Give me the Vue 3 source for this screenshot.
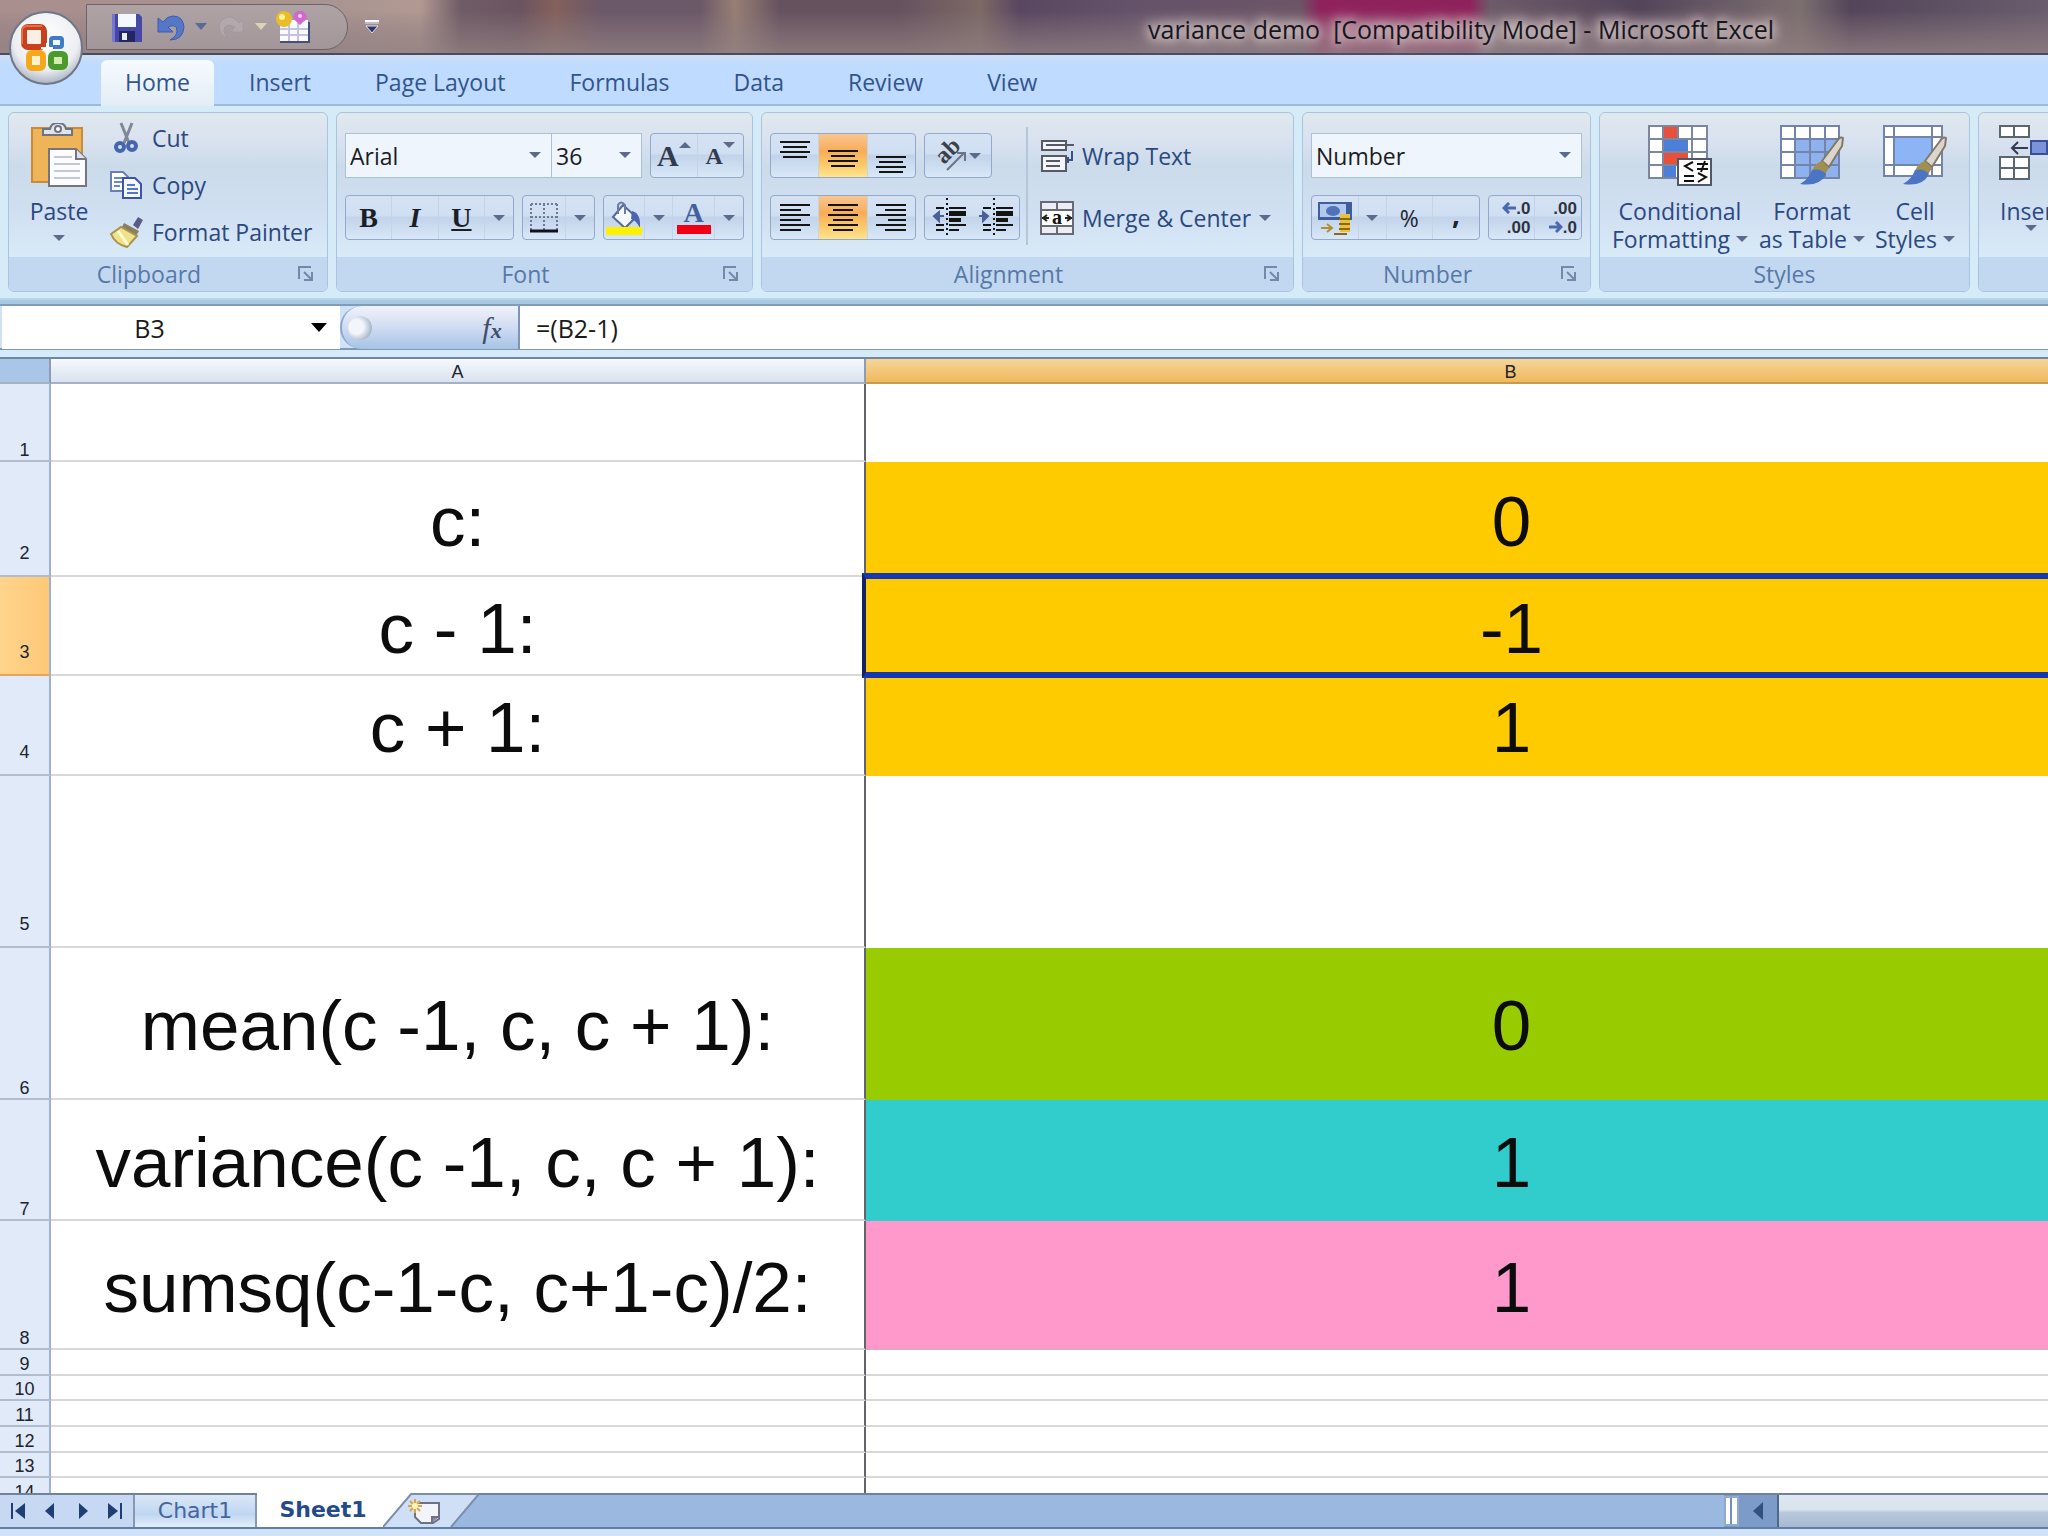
<script setup>
import { ref } from 'vue'

const tabs = ['Home', 'Insert', 'Page Layout', 'Formulas', 'Data', 'Review', 'View']
const fontName = ref('Arial')
const fontSize = ref('36')
const format = ref('Number')
const cellName = ref('B3')
const formula = ref('=(B2-1)')

const rows = [
  { n: 1, h: 78, a: '', b: '', fill: 'blank' },
  { n: 2, h: 115, a: 'c:', b: '0', fill: 'gold', raised: true },
  { n: 3, h: 99, a: 'c - 1:', b: '-1', fill: 'gold', raised: true, active: true },
  { n: 4, h: 100, a: 'c + 1:', b: '1', fill: 'gold', raised: true },
  { n: 5, h: 172, a: '', b: '', fill: 'blank', raised: true },
  { n: 6, h: 152, a: 'mean(c -1, c, c + 1):', b: '0', fill: 'green' },
  { n: 7, h: 121, a: 'variance(c -1, c, c + 1):', b: '1', fill: 'teal' },
  { n: 8, h: 129, a: 'sumsq(c-1-c, c+1-c)/2:', b: '1', fill: 'pink' },
  { n: 9, h: 26 },
  { n: 10, h: 25 },
  { n: 11, h: 26 },
  { n: 12, h: 26 },
  { n: 13, h: 25 },
  { n: 14, h: 26 }
]

const hAlign = [
  { name: 'Align left', lines: [[0, 30], [0, 21], [0, 30], [0, 21], [0, 30], [0, 21]] },
  { name: 'Center', on: true, lines: [[0, 30], [5, 25], [0, 30], [5, 25], [0, 30], [5, 25]] },
  { name: 'Align right', lines: [[0, 30], [9, 30], [0, 30], [12, 30], [0, 30], [9, 30]] }
]
const vAlign = [
  { name: 'Top align', y: 8 },
  { name: 'Middle align', y: 17, on: true },
  { name: 'Bottom align', y: 23 }
]
</script>

<template>
  <div class="window">
    <header class="titlebar">
      <button class="office" aria-label="Office Button">
        <svg viewBox="0 0 76 76" width="76" height="76">
          <defs>
            <radialGradient id="orb" cx="50%" cy="35%" r="65%">
              <stop offset="0" stop-color="#ffffff" /><stop offset="0.7" stop-color="#eceef2" /><stop offset="1" stop-color="#a9b3c4" />
            </radialGradient>
          </defs>
          <circle cx="38" cy="38" r="36" fill="url(#orb)" stroke="#6f7686" stroke-width="2" />
          <rect x="16" y="17" width="20" height="20" rx="4" fill="#fbeee4" stroke="#c8401c" stroke-width="6" />
          <path d="M14 34V21q0-5 5-5h15" fill="none" stroke="#e2704a" stroke-width="2" />
          <rect x="43" y="28" width="11" height="9" rx="2" fill="none" stroke="#3c7cc8" stroke-width="4" />
          <rect x="21" y="43" width="14" height="15" rx="3" fill="#fff3cc" stroke="#f5a81c" stroke-width="6" />
          <rect x="43" y="44" width="14" height="13" rx="3" fill="#d5ecb0" stroke="#4a9a2c" stroke-width="6" />
          <path d="M33 38h12M39 33v12" stroke="#fff" stroke-width="2" />
        </svg>
      </button>
      <div class="qat">
        <button aria-label="Save">
          <svg viewBox="0 0 32 32" width="32" height="32">
            <path d="M1 3h27l3 3v25H1z" fill="#4648a8" /><path d="M7 3h18v13H7z" fill="#f3f7ff" />
            <path d="M8 20h16v11H8z" fill="#24265e" /><path d="M11 22h5v7h-5z" fill="#e8ecfa" /><path d="M1 3h3v28H1z" fill="#7476d0" />
          </svg>
        </button>
        <button aria-label="Undo">
          <svg viewBox="0 0 32 32" width="32" height="32">
            <path d="M3 7v14h15l-5-5q9-4 9 4 0 5-7 9 13 0 14-13Q28 5 18 5q-6 0-10 6z" fill="#5577c8" stroke="#3c5cae" />
          </svg>
        </button>
        <svg class="tri" viewBox="0 0 12 7" width="12" height="7"><path d="M0 0h12L6 7z" fill="#5a6a98" /></svg>
        <button aria-label="Redo">
          <svg viewBox="0 0 32 32" width="32" height="32">
            <path d="M28 9v12H16l4-5q-11-5-11 4 0 4 4 7Q4 25 4 15 6 5 16 6q5 1 8 6z" fill="#b3a8ac" stroke="#a1989f" />
          </svg>
        </button>
        <svg class="tri" viewBox="0 0 12 7" width="12" height="7"><path d="M0 0h12L6 7z" fill="#ddd3b4" /></svg>
        <button aria-label="Edit table">
          <svg viewBox="0 0 36 32" width="36" height="32">
            <path d="M5 11h30v21H5z" fill="#46507e" /><path d="M5 9h28v21H5z" fill="#fbfbff" />
            <path d="M5 18h28M5 24h28M14 12v18M23 12v18" stroke="#c0c4e0" stroke-width="2" />
            <circle cx="9" cy="8" r="8" fill="#e8bd27" /><circle cx="7" cy="6" r="3" fill="#fff0a0" />
            <path d="M20 2q5-5 10 0 5 5-2 9l-3 3-3-3q-6-4-2-9z" fill="#cf6ac8" /><circle cx="25" cy="5" r="2" fill="#f7c9f2" />
          </svg>
        </button>
      </div>
      <button class="qat-more" aria-label="Customize Quick Access Toolbar">
        <svg viewBox="0 0 16 14" width="16" height="14"><path d="M1 1h14" stroke="#fff" stroke-width="2" /><path d="M1 3h14M2 6h12l-6 7z" fill="#2d3868" stroke="#dfe2ee" /></svg>
      </button>
      <h1>variance demo&nbsp; [Compatibility Mode] - Microsoft Excel</h1>
    </header>

    <nav class="tabs">
      <a v-for="(t, i) in tabs" :key="t" href="#" :class="{ on: i === 0 }">{{ t }}</a>
    </nav>

    <section class="ribbon">
      <div class="group clipboard">
        <div class="body">
          <button class="big paste">
            <svg viewBox="0 0 56 64" width="56" height="64">
              <path d="M1 5h50v54H1z" fill="#f0b458" stroke="#c88c38" stroke-width="2" />
              <path d="M12 12V6h7q1-6 8-6t8 6h6v6z" fill="#dfe3ea" stroke="#6d7480" stroke-width="2" /><circle cx="27" cy="6" r="3" fill="#fff" stroke="#6d7480" stroke-width="2" />
              <path d="M18 26h27l10 10v27H18z" fill="#fcfcff" stroke="#76757e" stroke-width="2" /><path d="M45 26v10h10" fill="#dde3ee" stroke="#76757e" stroke-width="2" />
              <path d="M23 34h18M23 41h26M23 48h26M23 55h26" stroke="#c4c8d4" stroke-width="2" />
            </svg>
            <span>Paste</span>
            <svg class="tri" viewBox="0 0 12 6" width="12" height="6"><path d="M0 0h12L6 6z" /></svg>
          </button>
          <div class="list">
            <button>
              <svg viewBox="0 0 34 32" width="34" height="32">
                <path d="M12 1l8 20M23 1l-8 20" stroke="#7e8898" stroke-width="3" /><circle cx="11" cy="25" r="4" fill="none" stroke="#4565ad" stroke-width="4" /><circle cx="23" cy="24" r="4" fill="none" stroke="#4565ad" stroke-width="4" />
              </svg>Cut
            </button>
            <button>
              <svg viewBox="0 0 34 32" width="34" height="32">
                <path d="M2 3h12l5 5v14H2z" fill="#fff" stroke="#6a7fb4" stroke-width="2" /><path d="M5 9h8M5 13h8M5 17h6" stroke="#6a8ad0" stroke-width="2" />
                <path d="M14 9h12l6 6v14H14z" fill="#f5f8ff" stroke="#3d56a4" stroke-width="2" /><path d="M18 16h8M18 20h11M18 24h11" stroke="#5676c8" stroke-width="2" />
              </svg>Copy
            </button>
            <button>
              <svg viewBox="0 0 34 32" width="34" height="32">
                <path d="M24 9l5-8 5 3-5 9z" fill="#5a5c88" /><path d="M15 7l15 8-3 5L12 13z" fill="#8a8060" />
                <path d="M12 11l16 9-10 11Q6 28 2 18z" fill="#f0e28a" stroke="#a8924c" stroke-width="2" /><path d="M9 15l10 14" stroke="#fffad0" stroke-width="3" />
              </svg>Format Painter
            </button>
          </div>
        </div>
        <footer><span>Clipboard</span><button class="launch" aria-label="Clipboard options"><svg viewBox="0 0 16 16" width="16" height="16"><path d="M1 13V1h12" /><path d="M6 6l8 8M14 6v8H6" /></svg></button></footer>
      </div>

      <div class="group font">
        <div class="body rows">
          <div class="row">
            <div class="combos">
              <label class="combo name"><select v-model="fontName" aria-label="Font"><option>Arial</option></select><svg class="tri" viewBox="0 0 12 6" width="12" height="6"><path d="M0 0h12L6 6z" /></svg></label>
              <label class="combo size"><select v-model="fontSize" aria-label="Font size"><option>36</option></select><svg class="tri" viewBox="0 0 12 6" width="12" height="6"><path d="M0 0h12L6 6z" /></svg></label>
            </div>
            <div class="set grow">
              <button aria-label="Increase font size"><b class="ser l">A</b><svg class="tri up" viewBox="0 0 12 6" width="12" height="6"><path d="M0 6h12L6 0z" /></svg></button>
              <button aria-label="Decrease font size"><b class="ser s">A</b><svg class="tri up" viewBox="0 0 12 6" width="12" height="6"><path d="M0 0h12L6 6z" /></svg></button>
            </div>
          </div>
          <div class="row">
            <div class="set biu">
              <button><b class="ser">B</b></button>
              <button><b class="ser"><i>I</i></b></button>
              <button><b class="ser"><u>U</u></b></button>
              <button class="drop" aria-label="Underline styles"><svg class="tri" viewBox="0 0 12 6" width="12" height="6"><path d="M0 0h12L6 6z" /></svg></button>
            </div>
            <div class="set border">
              <button aria-label="Bottom border"><svg viewBox="0 0 28 30" width="28" height="30"><path d="M1 1h26M1 14h26M1 1v26M14 1v26M27 1v26" stroke="#6d7896" stroke-width="2" stroke-dasharray="2 2" fill="none" /><path d="M0 28h28" stroke="#10131c" stroke-width="3" /></svg></button>
              <button class="drop" aria-label="Borders"><svg class="tri" viewBox="0 0 12 6" width="12" height="6"><path d="M0 0h12L6 6z" /></svg></button>
            </div>
            <div class="set colors">
              <button aria-label="Fill color"><svg viewBox="0 0 36 36" width="36" height="36"><path d="M17 5l13 12-11 11L7 17z" fill="#f6f8ff" stroke="#59698f" stroke-width="2" /><path d="M12 14V5q3-5 7 0v9" fill="none" stroke="#6b7ba8" stroke-width="2" /><path d="M26 11q9 2 8 17-4-8-9-9z" fill="#4b63b4" /><path d="M0 27h36v8H0z" fill="#fdf000" /></svg></button>
              <button class="drop" aria-label="Fill colors"><svg class="tri" viewBox="0 0 12 6" width="12" height="6"><path d="M0 0h12L6 6z" /></svg></button>
              <button class="fc" aria-label="Font color"><b class="ser">A</b><span class="bar"></span></button>
              <button class="drop" aria-label="Font colors"><svg class="tri" viewBox="0 0 12 6" width="12" height="6"><path d="M0 0h12L6 6z" /></svg></button>
            </div>
          </div>
        </div>
        <footer><span>Font</span><button class="launch" aria-label="Font options"><svg viewBox="0 0 16 16" width="16" height="16"><path d="M1 13V1h12" /><path d="M6 6l8 8M14 6v8H6" /></svg></button></footer>
      </div>

      <div class="group align">
        <div class="body">
          <div class="rows left">
            <div class="row">
              <div class="set three">
                <button v-for="v in vAlign" :key="v.name" :aria-label="v.name" :class="{ on: v.on }">
                  <svg viewBox="0 0 30 43" width="30" height="43"><path :d="`M0 ${v.y}h30M3 ${v.y + 5}h24M0 ${v.y + 10}h30M3 ${v.y + 15}h24`" stroke="#141414" stroke-width="2" /></svg>
                </button>
              </div>
              <div class="set ori">
                <button aria-label="Orientation">
                  <svg viewBox="0 0 34 34" width="34" height="34"><text x="0" y="0" transform="translate(9 26) rotate(-45)" font-family="Liberation Serif" font-weight="bold" font-size="24" fill="#3c4048">ab</text><path d="M12 31l17-17M22 14h8v8" fill="none" stroke="#6a7484" stroke-width="2" /></svg>
                  <svg class="tri" viewBox="0 0 12 6" width="12" height="6"><path d="M0 0h12L6 6z" /></svg>
                </button>
              </div>
            </div>
            <div class="row">
              <div class="set three">
                <button v-for="h in hAlign" :key="h.name" :aria-label="h.name" :class="{ on: h.on }">
                  <svg viewBox="0 0 30 27" width="30" height="27"><path v-for="(l, i) in h.lines" :key="i" :d="`M${l[0]} ${1 + i * 5}H${l[1]}`" stroke="#141414" stroke-width="2" /></svg>
                </button>
              </div>
              <div class="set indent">
                <button v-for="d in [0, 1]" :key="d" :aria-label="d ? 'Increase indent' : 'Decrease indent'">
                  <svg viewBox="0 0 34 40" width="34" height="40"><path d="M4 10h8M17 10h17M4 27h8M17 27h17M4 32h8M17 32h10" stroke="#141414" stroke-width="2" /><path d="M17 13h17v5H17zM17 20h12v4H17z" fill="#141414" /><path d="M15 0v40" stroke="#141414" stroke-width="2" stroke-dasharray="2 3" /><path :d="d ? 'M0 18h8M4 14l5 4-5 5z' : 'M3 18h9M7 14l-5 4 5 5z'" stroke="#4a6099" fill="#4a6099" stroke-width="2" /></svg>
                </button>
              </div>
            </div>
          </div>
          <div class="rows right">
            <button class="wide"><svg viewBox="0 0 34 34" width="34" height="34"><path d="M2 2h24v9H2zM2 17h24v15H2z" fill="#f4f5f8" stroke="#555b66" stroke-width="2" /><path d="M6 6h28M6 22h14M6 27h14" stroke="#555b66" stroke-width="2" /><path d="M32 12v9h-3M28 18v6" fill="none" stroke="#39508c" stroke-width="2" /></svg>Wrap Text</button>
            <button class="wide"><svg viewBox="0 0 34 34" width="34" height="34"><path d="M1 1h32v32H1z" fill="#eceef3" stroke="#666b76" stroke-width="2" /><path d="M1 9h32M1 25h32M17 1v8M17 25v8" stroke="#666b76" stroke-width="2" /><path d="M2 10h30v14H2z" fill="#fff" /><path d="M2 17h7M25 17h7M7 14l-4 3 4 3M27 14l4 3-4 3" fill="none" stroke="#222" stroke-width="2" /><text x="12" y="23" font-family="Liberation Serif" font-weight="bold" font-size="20" fill="#111">a</text></svg>Merge &amp; Center<svg class="tri" viewBox="0 0 12 6" width="12" height="6"><path d="M0 0h12L6 6z" /></svg></button>
          </div>
        </div>
        <footer><span>Alignment</span><button class="launch" aria-label="Alignment options"><svg viewBox="0 0 16 16" width="16" height="16"><path d="M1 13V1h12" /><path d="M6 6l8 8M14 6v8H6" /></svg></button></footer>
      </div>

      <div class="group number">
        <div class="body rows">
          <label class="combo"><select v-model="format" aria-label="Number format"><option>Number</option></select><svg class="tri" viewBox="0 0 12 6" width="12" height="6"><path d="M0 0h12L6 6z" /></svg></label>
          <div class="row">
            <div class="set money">
              <button aria-label="Accounting format"><svg viewBox="0 0 36 36" width="36" height="36"><path d="M1 2h34v18H1z" fill="#3f5f9c" /><path d="M3 4h26v13H3z" fill="#b3c8ee" /><ellipse cx="16" cy="11" rx="7" ry="5" fill="#4f72b8" /><path d="M23 14h10v18H23z" fill="#e8c23c" /><path d="M22 19h11M22 24h11M22 29h11M17 34h13" stroke="#8c6a10" stroke-width="2" /><path d="M4 28h10M10 24l5 4-5 4" fill="none" stroke="#b09030" stroke-width="2" /></svg></button>
              <button class="drop" aria-label="Currencies"><svg class="tri" viewBox="0 0 12 6" width="12" height="6"><path d="M0 0h12L6 6z" /></svg></button>
              <button class="pct">%</button>
              <button class="comma">,</button>
            </div>
            <div class="set dec">
              <button aria-label="Increase decimal"><span><svg viewBox="0 0 14 12" width="14" height="12"><path d="M14 6H3M7 1L2 6l5 5" /></svg>.0</span><span>.00</span></button>
              <button aria-label="Decrease decimal"><span>.00</span><span><svg viewBox="0 0 14 12" width="14" height="12"><path d="M0 6h11M7 1l5 5-5 5" /></svg>.0</span></button>
            </div>
          </div>
        </div>
        <footer><span>Number</span><button class="launch" aria-label="Number options"><svg viewBox="0 0 16 16" width="16" height="16"><path d="M1 13V1h12" /><path d="M6 6l8 8M14 6v8H6" /></svg></button></footer>
      </div>

      <div class="group styles">
        <div class="body">
          <button class="big">
            <svg viewBox="0 0 64 64" width="64" height="64"><path d="M1 3h58v52H1z" fill="#fff" /><path d="M15 3h15v13H15zM15 29h25v13H15z" fill="#e8503a" /><path d="M15 16h25v13H15zM15 42h13v13H15z" fill="#4c7fd8" /><path d="M1 3h58v52H1zM1 16h58M1 29h58M1 42h58M15 3v52M30 3v13M44 3v52" fill="none" stroke="#7b879e" stroke-width="2" /><path d="M30 36h33v26H30z" fill="#fff" stroke="#50576a" stroke-width="2" /><path d="M45 39l-8 4 8 5M36 53h10M36 58h10M49 41h11M49 46h11M57 38l-4 11M50 50l8 4-8 5" fill="none" stroke="#111" stroke-width="2" /></svg>
            <span>Conditional</span><span>Formatting<svg class="tri" viewBox="0 0 12 6" width="12" height="6"><path d="M0 0h12L6 6z" /></svg></span>
          </button>
          <button class="big">
            <svg viewBox="0 0 64 64" width="64" height="64"><path d="M1 3h58v52H1z" fill="#fff" /><path d="M15 16h44v39H15z" fill="#8fb2ee" /><path d="M1 3h58v52H1zM1 16h58M1 29h58M1 42h58M15 3v52M30 3v52M45 3v52" fill="none" stroke="#7284ac" stroke-width="2" /><path d="M63 15q-3-2-6 3L42 38l7 6 13-21z" fill="#dcd5cc" stroke="#807868" stroke-width="2" /><path d="M42 38l7 7-5 8-12-5q3-8 10-10z" fill="#a09050" /><path d="M32 47q-3 9-12 14 20 3 26-10-5-6-14-4z" fill="#4c74c4" /></svg>
            <span>Format</span><span>as Table<svg class="tri" viewBox="0 0 12 6" width="12" height="6"><path d="M0 0h12L6 6z" /></svg></span>
          </button>
          <button class="big">
            <svg viewBox="0 0 64 64" width="64" height="64"><path d="M1 3h58v50H1z" fill="#fff" /><path d="M11 14h38v28H11z" fill="#8db4f4" /><path d="M1 3h58v50H1zM1 14h58M1 42h58M11 3v50M49 3v50" fill="none" stroke="#7284ac" stroke-width="2" /><path d="M63 15q-3-2-6 3L42 38l7 6 13-21z" fill="#dcd5cc" stroke="#807868" stroke-width="2" /><path d="M42 38l7 7-5 8-12-5q3-8 10-10z" fill="#a09050" /><path d="M32 47q-3 9-12 14 20 3 26-10-5-6-14-4z" fill="#4c74c4" /></svg>
            <span>Cell</span><span>Styles<svg class="tri" viewBox="0 0 12 6" width="12" height="6"><path d="M0 0h12L6 6z" /></svg></span>
          </button>
        </div>
        <footer><span>Styles</span></footer>
      </div>

      <div class="group cells">
        <div class="body">
          <button class="big">
            <svg viewBox="0 0 64 64" width="64" height="64"><path d="M1 3h29v11H1zM1 34h29v22H1z" fill="#fff" stroke="#5c6670" stroke-width="2" /><path d="M15 3v11M15 34v22M1 45h29" stroke="#5c6670" stroke-width="2" /><path d="M32 18h32v13H32z" fill="#7a94dc" stroke="#3c4f94" stroke-width="2" /><path d="M48 18v13" stroke="#3c4f94" stroke-width="2" /><path d="M29 25H13M19 19l-6 6 6 6" fill="none" stroke="#333c50" stroke-width="2" /></svg>
            <span>Insert</span><span><svg class="tri" viewBox="0 0 12 6" width="12" height="6"><path d="M0 0h12L6 6z" /></svg></span>
          </button>
        </div>
        <footer></footer>
      </div>
    </section>

    <section class="formula-bar">
      <div class="namebox">
        <input v-model="cellName" aria-label="Name Box" />
        <svg viewBox="0 0 16 9" width="16" height="9"><path d="M0 0h16L8 9z" fill="#000" /></svg>
      </div>
      <div class="fx">
        <span class="knob"></span>
        <button aria-label="Insert Function"><i>f</i><i class="x">x</i></button>
      </div>
      <input v-model="formula" class="formula" aria-label="Formula Bar" />
    </section>

    <main class="sheet">
      <table>
        <colgroup><col class="c0" /><col class="ca" /><col class="cb" /></colgroup>
        <thead><tr><th class="corner"></th><th>A</th><th class="sel">B</th></tr></thead>
        <tbody>
          <tr v-for="r in rows" :key="r.n" :style="{ height: r.h + 'px' }">
            <th :class="{ sel: r.active, raised: r.raised }">{{ r.n }}</th>
            <td class="a">{{ r.a }}</td>
            <td :class="[r.fill, { active: r.active }]">{{ r.b }}</td>
          </tr>
        </tbody>
      </table>
    </main>

    <footer class="bottom">
      <div class="nav">
        <button aria-label="First sheet"><svg viewBox="0 0 14 16" width="14" height="16"><path d="M0 0h2v16H0zM14 0v16L4 8z" /></svg></button>
        <button aria-label="Previous sheet"><svg viewBox="0 0 14 16" width="14" height="16"><path d="M11 0v16L2 8z" /></svg></button>
        <button aria-label="Next sheet"><svg viewBox="0 0 14 16" width="14" height="16"><path d="M3 0v16l9-8z" /></svg></button>
        <button aria-label="Last sheet"><svg viewBox="0 0 14 16" width="14" height="16"><path d="M12 0h2v16h-2zM0 0v16l10-8z" /></svg></button>
      </div>
      <button class="tab chart">Chart1</button>
      <button class="tab current">Sheet1</button>
      <button class="new" aria-label="Insert Worksheet">
        <svg viewBox="0 0 96 34" width="96" height="34"><path d="M0 0h28v2L0 34z" fill="#fff" /><path d="M0 34L28 2h68L68 34z" fill="#cfe0f6" /><path d="M0 34L28 1h68L68 34" fill="none" stroke="#7c8cab" stroke-width="2" /><path d="M34 10h22v16l-6 4H38l-6-6V14" fill="#f3f4fa" stroke="#6c7284" stroke-width="2" /><path d="M56 24h-7v6" fill="#8a90a0" stroke="#6c7284" stroke-width="2" /><path d="M32 6v14M25 13h14M27 8l10 10M37 8L27 18" stroke="#d9a545" stroke-width="2" /><circle cx="32" cy="13" r="3" fill="#fff3b8" /></svg>
      </button>
      <div class="scroll">
        <span class="split"></span>
        <button class="arrow" aria-label="Scroll left"><svg viewBox="0 0 10 18" width="10" height="18"><path d="M10 0v18L0 9z" fill="#33507e" /></svg></button>
        <span class="thumb"></span>
      </div>
    </footer>
  </div>
</template>

<style>
body { margin: 0; }
</style>

<style scoped>
* { box-sizing: border-box; }
.window {
  display: flex; flex-direction: column; height: 100vh; overflow: hidden;
  font-family: "Open Sans", "Noto Sans", sans-serif; font-size: 23px; line-height: 28px; color: #2b4880; background: #cfe2f6;
}
button, input, select { font: inherit; color: inherit; border: 0; background: none; padding: 0; margin: 0; border-radius: 0; }
button { display: flex; align-items: center; justify-content: center; white-space: nowrap; }
svg { display: block; flex: none; }
.tri { fill: #5c6b8a; }

.titlebar {
  position: relative; z-index: 2; flex: none; display: flex; align-items: center; height: 55px; padding-left: 86px;
  border-bottom: 2px solid #484c60;
  background:
    linear-gradient(180deg, transparent 20%, rgba(160, 145, 140, 0.55) 100%),
    linear-gradient(180deg, transparent 20%, rgba(112, 89, 106, 0.5) 100%),
    linear-gradient(90deg, #a98f8e 0, #a89492 330px, #b29a92 420px, #705c66 460px, #6a5460 520px, #84615c 555px, #6b5868 600px, #6b5868 700px, #987f74 735px, #66525f 780px, #66525f 900px, #7d6965 980px, #594660 1020px, #64526a 1130px, #6c5566 1300px, #8f225c 1320px, #8f225c 1470px, #6c5b68 1490px, #54445a 1640px, #7d7070 1800px, #54455a 1850px, #695d6d 100%);
}
.office { position: absolute; left: 8px; top: 10px; }
.qat { display: flex; align-items: center; gap: 12px; width: 262px; height: 46px; padding-left: 24px; border: 1px solid #6d6367; border-radius: 0 23px 23px 0; background: linear-gradient(#b0a3a5, #a2969a); }
.qat .tri { margin: 0 -4px; }
.qat-more { width: 48px; height: 46px; }
h1 { flex: 1; margin: 0 0 0 752px; padding-top: 4px; font-size: 25px; line-height: 32px; font-weight: 400; color: #16161c; white-space: nowrap; text-shadow: 0 0 8px #d8caca, 0 0 12px #d8caca, 0 0 16px #d8caca, 0 0 20px #d8caca; }

.tabs { flex: none; display: flex; height: 51px; padding: 5px 0 0 101px; background: linear-gradient(#cfdff4, #bfdbff 20%, #bfdbff); border-bottom: 2px solid #9db9dc; }
.tabs a { height: 46px; padding: 0 32px; line-height: 44px; color: #32548c; text-decoration: none; white-space: nowrap; }
.tabs a.on { margin-right: 3px; padding: 0 24px; border-radius: 6px 6px 0 0; background: linear-gradient(#f6faff, #e2edf5); }

.ribbon { flex: none; display: flex; gap: 8px; height: 194px; padding: 6px 0 6px 8px; overflow: hidden; background: #d5ebf8; border-bottom: 2px solid #b8d4ea; }
.group { flex: none; display: flex; flex-direction: column; height: 180px; overflow: hidden; border: 1px solid #a9c4de; border-radius: 6px; background: linear-gradient(#e0e9ee 0, #d8e1ef 30px, #cbdbea 54px, #d0e0f2 100px, #d9eaf8 146px); }
.group footer { display: flex; align-items: center; height: 34px; background: #c1d8f0; color: #5878a6; }
.group footer span { flex: 1; text-align: center; }
.launch { width: 38px; height: 32px; padding-right: 4px; }
.launch svg { fill: none; stroke: #7489a8; stroke-width: 2; }
.body { flex: 1; display: flex; }
.clipboard { width: 320px; }
.font { width: 417px; }
.align { width: 533px; }
.number { width: 289px; }
.styles { width: 371px; }
.cells { width: 240px; }

.big { flex-direction: column; justify-content: flex-start; padding-top: 10px; line-height: 28px; }
.big > svg:first-child { margin-bottom: 10px; }
.big span { display: flex; align-items: center; gap: 6px; }
.paste { width: 100px; }
.paste .tri { margin-top: 10px; }
.list { display: flex; flex-direction: column; padding-top: 1px; }
.list button { gap: 9px; height: 47px; justify-content: flex-start; }

.rows { flex-direction: column; gap: 17px; padding: 20px 8px 0; }
.row { display: flex; gap: 8px; justify-content: space-between; }
.combos { display: flex; }
.combo { display: flex; position: relative; height: 45px; border: 1px solid #aebfd8; background: #eef5fc; color: #1c1c24; }
.combo select { flex: 1; width: 100%; appearance: none; padding-left: 4px; outline: 0; }
.combo .tri { position: absolute; right: 10px; top: 18px; }
.name { width: 207px; }
.size { width: 90px; border-left: 0; }
.set { display: flex; height: 45px; border: 1px solid #92a8cc; border-radius: 4px; overflow: hidden; background: linear-gradient(#d5e2f4, #d0dff2 45%, #c2d3ea 50%, #d8e8f8); }
.set button { flex: 1; border-right: 1px solid #c3d3e8; }
.set button:last-child { border-right: 0; }
.set .drop { flex: 0 0 28px; }
.set .on { background: linear-gradient(#f8c690, #f8ac58 40%, #fbc868 70%, #ffe58c); }
.grow { width: 94px; }
.ser { font-family: "Liberation Serif", serif; font-size: 28px; color: #1b1e26; }
.grow .ser { color: #323a4c; }
.grow .l { font-size: 30px; line-height: 36px; }
.grow .s { font-size: 24px; }
.grow .up { align-self: flex-start; margin-top: 8px; }
.biu { width: 170px; }
.border { width: 73px; }
.colors { width: 142px; }
.fc { flex-direction: column; }
.fc .ser { line-height: 24px; color: #42609c; }
.fc .bar { width: 34px; height: 9px; background: #f00014; }

.left { display: flex; width: 266px; border-right: 2px solid #b4c6da; margin: 14px 0 12px; padding-top: 6px; padding-right: 0; }
.left .row { justify-content: flex-start; }
.three { width: 146px; }
.ori { width: 68px; }
.indent { width: 96px; }
.indent button { border: 0; }
.right { display: flex; padding-left: 12px; align-items: flex-start; }
.wide { height: 45px; gap: 8px; }

.money { width: 170px; }
.dec { width: 95px; }
.pct, .comma { color: #1d2430; }
.comma { padding-bottom: 10px; font-weight: 700; font-size: 28px; }
.dec button { flex-direction: column; align-items: flex-end; padding-right: 4px; font-family: "Liberation Sans", sans-serif; font-size: 17px; line-height: 19px; font-weight: 700; color: #2d3442; }
.dec span { display: flex; align-items: center; }
.dec svg { fill: none; stroke: #4a68b0; stroke-width: 3; }

.styles .big { flex: none; width: 104px; }
.styles .big:first-child { width: 160px; }
.styles .big:last-child { width: 102px; }
.cells .big { width: 104px; }

.formula-bar { flex: none; display: flex; height: 57px; padding: 4px 0 8px 2px; background: linear-gradient(#a9c8e4 0 4px, #7f9db8 4px 6px, transparent 6px 48px, #8199b4 48px 50px, #d6ebfa 50px); font-size: 25px; color: #1a1a1a; }
.namebox { flex: none; display: flex; align-items: center; width: 338px; margin-top: 2px; background: #fff; height: 43px; }
.namebox input { width: 309px; text-align: center; padding-right: 14px; }
.fx { flex: none; display: flex; justify-content: space-between; width: 180px; height: 43px; margin-top: 2px; border-right: 2px solid #7f94b4; border-left: 2px solid #8ba6cc; border-radius: 22px 0 0 22px; background: linear-gradient(#f0f2fa, #d0dcf2 50%, #a6c3e6); }
.knob { width: 24px; height: 24px; margin: 10px 0 0 6px; border-radius: 50%; background: radial-gradient(circle at 35% 45%, #f2f5fa 35%, #a9b6c8 75%); }
.fx button { width: 52px; font-family: "Liberation Serif", serif; font-size: 30px; color: #414d68; }
.fx .x { padding-top: 6px; font-size: 22px; font-weight: 700; }
.formula { flex: 1; min-width: 0; margin-top: 2px; height: 43px; padding-left: 16px; background: #fff; }

.sheet { flex: 1; min-height: 0; overflow: hidden; background: #fff; border-top: 2px solid #71869f; }
table { width: 2157px; table-layout: fixed; border-collapse: separate; border-spacing: 0; }
.c0 { width: 51px; }
.ca { width: 815px; }
.cb { width: 1291px; }
th { padding: 0; font: 400 18px/20px "Liberation Sans", sans-serif; color: #20242c; vertical-align: bottom; }
thead th { height: 25px; border-bottom: 2px solid #a5b2c6; border-right: 2px solid #8e9bb4; background: linear-gradient(#f6f9fd, #d9e2ef); }
thead .corner { background: #a9c6e8; }
thead .sel { background: linear-gradient(#f6d59a, #f0b95c); border-bottom-color: #c99a4e; }
tbody th { background: #e0eaf8; border-right: 2px solid #9eb2cf; border-bottom: 2px solid #b1bccc; }
tbody .sel { background: linear-gradient(90deg, #ffd48c, #fdc877); border-bottom-color: #e6a558; }
.raised { padding-bottom: 12px; }
td { padding: 6px 0 0; text-align: center; vertical-align: middle; font: 71px/72px "Liberation Sans", Arial, sans-serif; color: #0c0c0c; border-bottom: 2px solid #d7d7dc; white-space: nowrap; }
tr:nth-child(n + 9) td { font-size: 18px; line-height: 18px; padding: 0; }
.a { border-right: 2px solid #63636b; }
.blank { border-bottom-color: #fff; }
.gold { background: #fdcb00; border-bottom-color: #fdcb00; }
.green { background: #99cc00; border-bottom-color: #99cc00; }
.teal { background: #31cccc; border-bottom-color: #31cccc; }
.pink { background: #ff99cc; border-bottom-color: #e8a0c4; }
.active { position: relative; }
.active::after { content: ""; position: absolute; inset: -4px; border: 6px solid #1537b4; border-left: 4px solid #16235e; }

.bottom { flex: none; display: flex; height: 43px; padding-bottom: 7px; border-top: 2px solid #70819c; background: linear-gradient(#9bb9e0 0 32px, #5f7ea4 32px 34px, #cfe2f8 34px); }
.nav { display: flex; align-items: center; width: 133px; height: 32px; padding: 0 2px; background: #c6d8f2; }
.nav button { flex: 1; }
.nav svg { fill: #1f3f74; }
.tab { height: 32px; font-family: "DejaVu Sans", sans-serif; font-size: 22px; color: #46659c; }
.chart { width: 124px; border-left: 2px solid #8798b4; border-right: 2px solid #8798b4; background: linear-gradient(#dbe8f6, #bfd6f2 60%, #e4effa); }
.current { width: 126px; margin-top: -2px; height: 34px; padding-left: 6px; background: #fff; font-weight: 700; color: #244a8a; }
.new { height: 34px; margin-top: -2px; }
.scroll { display: flex; width: 324px; height: 32px; margin-left: auto; background: #7d9bc8; }
.split { width: 15px; margin: 1px 0; border: 2px solid #8fa9cf; background: linear-gradient(90deg, #fff 4px, #6f8fbc 4px 6px, #fff 6px); }
.arrow { width: 38px; }
.thumb { flex: 1; border-left: 2px solid #50678c; background: linear-gradient(#dfe8f2, #d8e3ec 45%, #b9c9dc 55%, #a7b9d0); }
</style>
